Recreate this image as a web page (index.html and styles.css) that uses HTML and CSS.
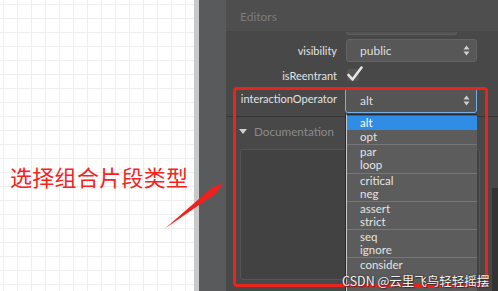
FILE: index.html
```html
<!DOCTYPE html>
<html lang="zh">
<head>
<meta charset="utf-8">
<link rel="stylesheet" href="styles.css">
</head>
<body>
<div class="app">
  <div class="canvas"></div>
  <div class="splitter"></div>
  <div class="gutter"></div>
  <div class="panel">
    <div class="header">Editors</div>
    <div class="body">
      <div class="prev-select"></div>
      <div class="row row-vis">
        <div class="label">visibility</div>
        <div class="select"><span>public</span><svg class="updown" width="7" height="11" viewBox="0 0 7 11"><path d="M0.5 4.5 L3.5 0.5 L6.5 4.5Z M0.5 6.5 L3.5 10.5 L6.5 6.5Z" fill="#cfcfcf"/></svg></div>
      </div>
      <div class="row row-check">
        <div class="label">isReentrant</div>
        <div class="check"><svg width="16" height="16" viewBox="0 0 16 16"><path d="M1.5 9 L5.5 13.5 L14.5 1.5" fill="none" stroke="#e6e6e6" stroke-width="2.6" stroke-linecap="round" stroke-linejoin="round"/></svg></div>
      </div>
      <div class="row row-op">
        <div class="label">interactionOperator</div>
        <div class="select focused"><span>alt</span><svg class="updown" width="7" height="11" viewBox="0 0 7 11"><path d="M0.5 4.5 L3.5 0.5 L6.5 4.5Z M0.5 6.5 L3.5 10.5 L6.5 6.5Z" fill="#cfcfcf"/></svg></div>
      </div>
      <div class="sep"></div>
      <div class="doc-head"><span class="tri"></span>Documentation</div>
      <div class="textarea"></div>
    </div>
    <div class="scrollbar"></div>
  </div>

  <ul class="dropdown">
    <li class="sel">alt</li>
    <li>opt</li>
    <li class="grp">par</li>
    <li>loop</li>
    <li class="grp">critical</li>
    <li>neg</li>
    <li class="grp">assert</li>
    <li>strict</li>
    <li class="grp">seq</li>
    <li>ignore</li>
    <li class="grp">consider</li>
  </ul>

  <div class="redbox"></div>
  <div class="note">选择组合片段类型</div>
  <svg class="arrow" width="498" height="291" viewBox="0 0 498 291"><polygon points="223,183 216.5,193 165,228.5 212,187.5" fill="#f0201c"/></svg>
  <div class="watermark">CSDN @云里飞鸟轻轻摇摆</div>
</div>
</body>
</html>
```
FILE: styles.css
```css
html, body {
  margin: 0;
  padding: 0;
}
body {
  width: 498px;
  height: 291px;
  overflow: hidden;
  font-family: Lato, "Noto Sans", sans-serif;
}
.app {
  position: relative;
  display: flex;
  width: 498px;
  height: 291px;
  overflow: hidden;
}
.canvas {
  width: 194px;
  background-color: #ffffff;
  background-image:
    linear-gradient(to right, #eeeeee 1px, transparent 1px),
    linear-gradient(to bottom, #eeeeee 1px, transparent 1px);
  background-size: 14px 14px;
  background-position: 3px 4px;
}
.splitter {
  width: 5px;
  background: #c9c9c9;
}
.gutter {
  width: 27px;
  background: #585a5c;
}
.panel {
  position: relative;
  flex: 1;
  display: flex;
  flex-direction: column;
  background: #484848;
  overflow: hidden;
}
.header {
  height: 32px;
  box-sizing: border-box;
  padding: 9px 0 0 14px;
  background: #4e4e4e;
  color: #7c7c7c;
  font-size: 12px;
  border-bottom: 1px solid #464646;
}
.body {
  display: flex;
  flex-direction: column;
}
.prev-select {
  margin-left: 120px;
  width: 109px;
  height: 2px;
  background: #525252;
  border: 1px solid #5f5f5f;
  border-top: none;
  border-radius: 0 0 3px 3px;
}
.row {
  display: grid;
  grid-template-columns: 111px 131px;
  column-gap: 9px;
  align-items: center;
}
.label {
  text-align: right;
  color: #e2e2e2;
  font-size: 11px;
  white-space: nowrap;
}
.row-vis { margin-top: 4px; }
.row-check { margin-top: 4px; height: 18px; }
.row-op { margin-top: 4px; }
.row-op .label { align-self: start; padding-top: 4px; }
.select {
  position: relative;
  height: 23px;
  box-sizing: border-box;
  background: #575757;
  border: 1px solid #636363;
  border-radius: 3px;
  color: #dedede;
  font-size: 12px;
  display: flex;
  align-items: center;
  padding-left: 13px;
}
.select.focused {
  height: 25px;
  border: 1px solid #78aee6;
  margin-left: -1px;
  padding-left: 14px;
  background: #555555;
}
.updown {
  position: absolute;
  right: 6px;
  top: 50%;
  margin-top: -5.5px;
}
.check {
  position: relative;
  width: 12px;
  height: 12px;
  background: #555555;
  border-radius: 2px;
  margin-left: 1px;
}
.check svg {
  position: absolute;
  left: 0;
  top: -3px;
}
.sep {
  margin-top: 3px;
  height: 1px;
  background: #363636;
}
.doc-head {
  display: flex;
  align-items: center;
  margin-top: 7px;
  padding-left: 13px;
  color: #8b8b8b;
  font-size: 11.7px;
  height: 14px;
}
.tri {
  width: 0;
  height: 0;
  border-left: 4px solid transparent;
  border-right: 4px solid transparent;
  border-top: 5px solid #cfcfcf;
  margin-right: 7px;
}
.textarea {
  margin: 11px 0 0 14px;
  width: 240px;
  height: 131px;
  box-sizing: border-box;
  background: #424242;
  border: 1px solid #555555;
  border-radius: 3px;
}
.scrollbar {
  position: absolute;
  right: 0;
  top: 188px;
  width: 6px;
  height: 103px;
  background: #333333;
}
.dropdown {
  position: absolute;
  left: 346px;
  top: 114px;
  width: 131px;
  height: 177px;
  margin: 0;
  padding: 1px 0 0 0;
  box-sizing: border-box;
  list-style: none;
  background: #5c5c5c;
  border-left: 1px solid #c8c8c8;
  border-top: 1px solid #2a2a2a;
  box-shadow: -1px 0 0 #2a2a2a;
  overflow: hidden;
}
.dropdown li {
  height: 14.15px;
  line-height: 14px;
  padding-left: 13px;
  color: #e4e4e4;
  font-size: 11.5px;
  box-sizing: border-box;
}
.dropdown li.grp {
  border-top: 1px solid #767676;
}
.dropdown li.sel {
  background: #2f8de6;
  color: #ffffff;
}
.redbox {
  position: absolute;
  left: 233px;
  top: 87px;
  width: 255px;
  height: 200px;
  box-sizing: border-box;
  border: 3px solid #e8241c;
  border-radius: 4px;
}
.note {
  position: absolute;
  left: 10px;
  top: 162px;
  color: #f5231d;
  font-family: "Noto Sans CJK SC", sans-serif;
  font-size: 22px;
  line-height: 28px;
  letter-spacing: 0.3px;
}
.arrow {
  position: absolute;
  left: 0;
  top: 0;
}
.watermark {
  position: absolute;
  left: 342px;
  top: 272px;
  color: #f2f2f2;
  font-family: "Noto Sans CJK SC", sans-serif;
  font-size: 12.5px;
  line-height: 17px;
  white-space: nowrap;
  text-shadow: 0 0 2px #333, 1px 1px 1px #333;
}
```
